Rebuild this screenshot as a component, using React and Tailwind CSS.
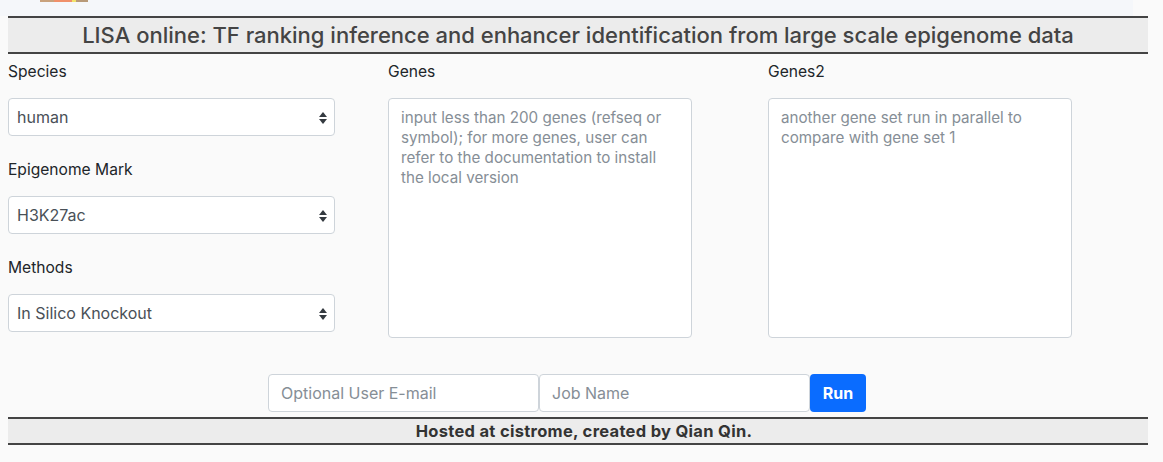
const font = { fontFamily: 'Inter, "Liberation Sans", Arial, sans-serif' };

const SelectArrows = () => (
  <svg width="8" height="12" viewBox="0 0 8 12" className="absolute right-[7px] top-[13px]">
    <path d="M4 0 L8 5 H0 Z" fill="#343a40" />
    <path d="M0 7 H8 L4 12 Z" fill="#343a40" />
  </svg>
);

const FakeSelect = ({ value }) => (
  <div className="relative h-[38px] w-[327px] rounded-[4px] border border-[#ced4da] bg-white pl-[8px] text-[16px] leading-[36px] text-[#495057]">
    {value}
    <SelectArrows />
  </div>
);

const Field = ({ label, value, first }) => (
  <div className={first ? "" : "mt-[22px]"}>
    <div className="h-[24px] text-[15.6px] leading-[24px] text-[#212529]">{label}</div>
    <div className="mt-[14px]">
      <FakeSelect value={value} />
    </div>
  </div>
);

const GeneBox = ({ label, placeholder }) => (
  <div>
    <div className="h-[24px] text-[15.6px] leading-[24px] text-[#212529]">{label}</div>
    <textarea
      placeholder={placeholder}
      className="mt-[14px] block h-[240px] w-[304px] resize-none rounded-[4px] border border-[#ced4da] bg-white px-[12px] pt-[9px] pb-[9px] text-[15.2px] leading-[20px] text-[#495057] placeholder:text-[#868e96] outline-none"
    />
  </div>
);

export default function App() {
  return (
    <div className="h-[462px] w-[1163px] overflow-hidden bg-[#fafafa]" style={font}>
      <div className="flex h-[16px] w-[1133px] bg-[#f5f7fa] pl-[40px]">
        <div className="flex h-[2px] w-[48px]">
          <div className="w-[14px] bg-[#c9a27c]" />
          <div className="w-[18px] bg-[#f0906a]" />
          <div className="w-[4px] bg-[#f2e36a]" />
          <div className="w-[12px] bg-[#b89a78]" />
        </div>
      </div>

      <div className="ml-[8px] flex h-[38px] w-[1140px] items-center justify-center border-y-2 border-[#444] bg-[#ececec] text-[22px] font-medium text-[#444]">
        LISA online: TF ranking inference and enhancer identification from large scale epigenome data
      </div>

      <div className="ml-[8px] mt-[6px] grid w-[1140px] grid-cols-3">
        <div>
          <Field first label="Species" value="human" />
          <Field label="Epigenome Mark" value="H3K27ac" />
          <Field label="Methods" value="In Silico Knockout" />
        </div>
        <GeneBox
          label="Genes"
          placeholder="input less than 200 genes (refseq or symbol); for more genes, user can refer to the documentation to install the local version"
        />
        <GeneBox label="Genes2" placeholder="another gene set run in parallel to compare with gene set 1" />
      </div>

      <div className="ml-[268px] mt-[36px] flex h-[38px]">
        <input
          placeholder="Optional User E-mail"
          className="h-[38px] w-[271px] rounded-[4px] border border-[#ced4da] bg-white px-[12px] text-[16px] text-[#495057] placeholder:text-[#868e96] outline-none"
        />
        <input
          placeholder="Job Name"
          className="h-[38px] w-[271px] rounded-[4px] border border-[#ced4da] bg-white px-[12px] text-[16px] text-[#495057] placeholder:text-[#868e96] outline-none"
        />
        <button className="h-[38px] w-[56px] rounded-[4px] bg-[#0a6cff] text-[16px] font-bold text-white">
          Run
        </button>
      </div>

      <div className="ml-[8px] mt-[5px] flex h-[28px] w-[1140px] items-center justify-center border-y-2 border-[#444] bg-[#ececec] pl-[12px] text-[16.5px] font-bold tracking-[0.3px] text-[#333]">
        Hosted at cistrome, created by Qian Qin.
      </div>
    </div>
  );
}
